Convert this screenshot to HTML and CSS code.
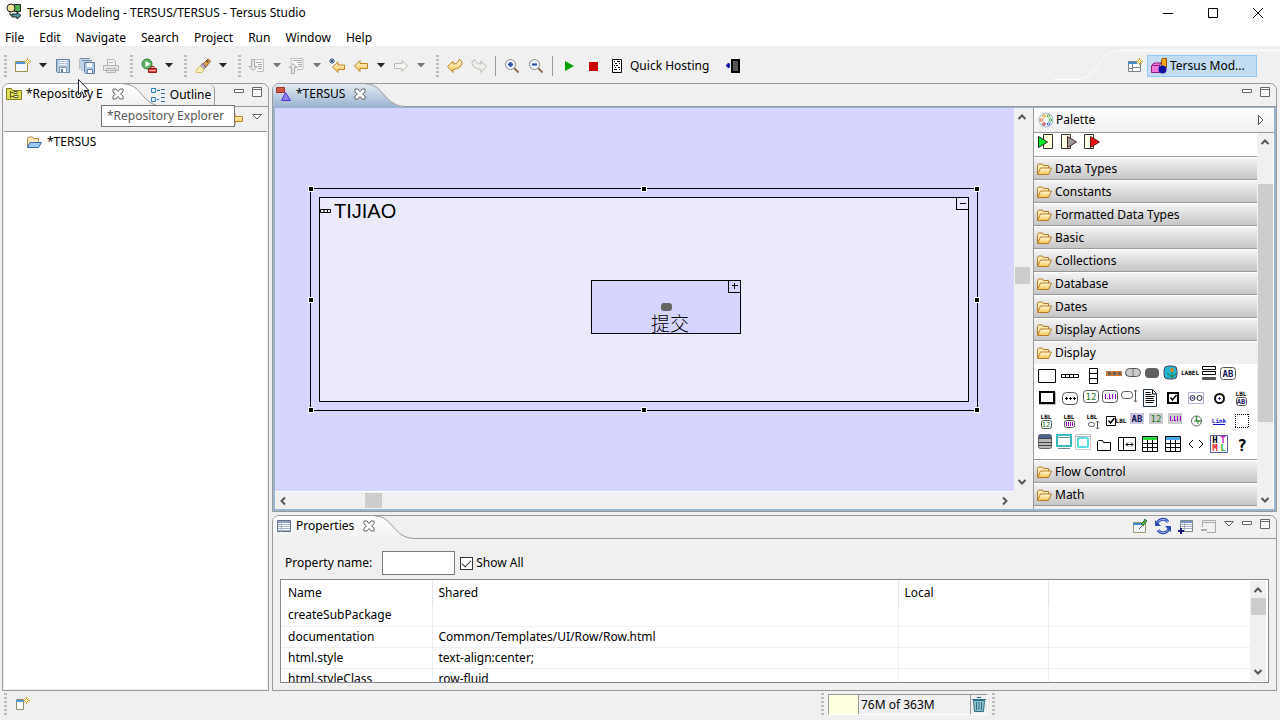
FILE: index.html
```html
<!DOCTYPE html>
<html lang="en">
<head>
<meta charset="utf-8">
<title>Tersus Modeling - TERSUS/TERSUS - Tersus Studio</title>
<link rel="stylesheet" href="styles.css">
</head>
<body>
<svg class="defs" aria-hidden="true">
  <defs>
    <linearGradient id="gold" x1="0" y1="0" x2="0" y2="1"><stop offset="0" stop-color="#fffbe0"/><stop offset="1" stop-color="#f3c34c"/></linearGradient>
    <linearGradient id="tabBlue" x1="0" y1="0" x2="0" y2="1"><stop offset="0" stop-color="#e3ebf3"/><stop offset="1" stop-color="#9ab4d1"/></linearGradient>
    <linearGradient id="tabLight" x1="0" y1="0" x2="0" y2="1"><stop offset="0" stop-color="#ffffff"/><stop offset="1" stop-color="#f0f0f0"/></linearGradient>
  </defs>
  <symbol id="i-folder" viewBox="0 0 16 16"><path d="M1.500 13V4.500l1-1.500h4l1 1.500h5V7" fill="#fdeab4" stroke="#b57a25"/><path d="M1.500 13.500L4.500 7h11l-3 6.500z" fill="url(#gold)" stroke="#b57a25"/></symbol>
  <symbol id="i-folder-blue" viewBox="0 0 16 16"><path d="M1.500 13V4.500l1-1.500h4l1 1.500h5V8" fill="#fbe9b6" stroke="#a58a50"/><path d="M1.500 13.500L4 8.500h11.500l-3 5z" fill="#9cc8f5" stroke="#3566b0"/></symbol>
  <symbol id="i-save" viewBox="0 0 16 16"><path d="M1.500 1.500h13v13h-12l-1-1z" fill="#b4c9e2" stroke="#637f9f"/><path d="M4 2h8v5H4z" fill="#f4f8fc"/><path d="M4 3.500h8M4 5.500h8" stroke="#b9c8da"/><path d="M4.500 9.500h7v5h-7z" fill="#fff" stroke="#8294aa"/><path d="M6 11h2v3H6z" fill="#637f9f"/></symbol>
  <symbol id="i-close" viewBox="0 0 12 12"><path d="M1 1h3l2 2.500L8 1h3v3L8.500 6 11 8v3H8L6 8.500 4 11H1V8l2.500-2L1 4z" fill="#fff" stroke="#666"/></symbol>
  <symbol id="i-min" viewBox="0 0 12 12"><path d="M1.500 3.500h9v3h-9z" fill="#fff" stroke="#666"/></symbol>
  <symbol id="i-max" viewBox="0 0 12 12"><path d="M1.500 1.500h9v9h-9zM1 3.500h10" fill="#fff" stroke="#666"/></symbol>
  <symbol id="i-menu" viewBox="0 0 12 12"><path d="M1.500 3.500h9L6 8z" fill="#fff" stroke="#666"/></symbol>
  <symbol id="i-up" viewBox="0 0 10 10"><path d="M1.500 7L5 3.500 8.500 7" fill="none" stroke="#555" stroke-width="2"/></symbol>
  <symbol id="i-down" viewBox="0 0 10 10"><path d="M1.500 3L5 6.500 8.500 3" fill="none" stroke="#555" stroke-width="2"/></symbol>
  <symbol id="i-left" viewBox="0 0 10 10"><path d="M7 1.500L3.500 5 7 8.500" fill="none" stroke="#555" stroke-width="2"/></symbol>
  <symbol id="i-right" viewBox="0 0 10 10"><path d="M3 1.500L6.500 5 3 8.500" fill="none" stroke="#555" stroke-width="2"/></symbol>
  <symbol id="i-drop" viewBox="0 0 8 5"><path d="M0 0h8L4 4.500z" fill="currentColor"/></symbol>
  <symbol id="i-larrow" viewBox="0 0 16 16"><path d="M1.500 8L7 2.500v3h7.500v5H7v3z" fill="url(#gold)" stroke="#bd8420"/></symbol>
  <symbol id="i-props" viewBox="0 0 16 16"><path d="M1.500 2.500h13v11h-13z" fill="#fff" stroke="#60708c"/><path d="M2 3h12v2H2z" fill="#8ca4c8"/><path d="M2 6.500h12M2 8.500h12M2 10.500h12M2 12.500h12M5.500 5v9" stroke="#a4b2c8"/></symbol>
</svg>

<header class="titlebar">
  <svg class="i16 app-icon" viewBox="0 0 16 16"><path d="M8.500 1.500h6v7h-6z" fill="#4fae4f" stroke="#222"/><circle cx="5" cy="5" r="4" fill="#efe29a" stroke="#222"/><path d="M4 9v3h3" fill="none" stroke="#222"/><path d="M6 11h5V9l4 3.500L11 16v-2H6z" fill="#4f9ca8" stroke="#222"/></svg>
  <h1>Tersus Modeling - TERSUS/TERSUS - Tersus Studio</h1>
  <button class="win" aria-label="Minimize"><svg class="i12" viewBox="0 0 12 12"><path d="M1 6.500h10" stroke="#000"/></svg></button>
  <button class="win" aria-label="Maximize"><svg class="i12" viewBox="0 0 12 12"><path d="M1.500 1.500h9v9h-9z" fill="none" stroke="#000"/></svg></button>
  <button class="win" aria-label="Close"><svg class="i12" viewBox="0 0 12 12"><path d="M1 1l10 10M11 1L1 11" stroke="#000"/></svg></button>
</header>

<nav class="menubar">
  <button>File</button><button>Edit</button><button>Navigate</button><button>Search</button><button>Project</button><button>Run</button><button>Window</button><button>Help</button>
</nav>

<div class="toolbar">
  <span class="grip"></span>
  <button class="tool" aria-label="New"><svg class="i16" viewBox="0 0 16 16"><path d="M.5 3.500h12v10H.5z" fill="#f2f8fe" stroke="#a58d50"/><path d="M1 4h9v2H1z" fill="#4d95d8"/><path d="M12.500 0v7M9 3.500h7M10.500 1.500l4 4M14.500 1.500l-4 4" stroke="#c79b2c"/><path d="M12.500 2v3M11 3.500h3" stroke="#fff6c0"/></svg></button>
  <button class="drop" aria-label="New menu"><svg><use href="#i-drop"/></svg></button>
  <button class="tool" aria-label="Save"><svg class="i16"><use href="#i-save"/></svg></button>
  <button class="tool" aria-label="Save All"><svg class="i16" viewBox="0 0 16 16"><path d="M1 11V.5h10M3 13V2.500h10" fill="none" stroke="#7890ac"/><path d="M1 1h9v1H3v9H1zM3 3h9v1H5v8H3z" fill="#bfd1e6"/><path d="M5.500 4.500h10v11h-9l-1-1z" fill="#b4c9e2" stroke="#637f9f"/><path d="M8 5h5v4H8z" fill="#fff"/><path d="M8.500 11.500h5v4h-5z" fill="#fff" stroke="#637f9f"/></svg></button>
  <button class="tool" aria-label="Print"><svg class="i16" viewBox="0 0 16 16"><path d="M4.500 7V1.500h6l2 2V7" fill="#f7f7f7" stroke="#b4b4b4"/><path d="M6 4.500h4M.5 7.500h15v5H.5zM3.500 10.500h9v4h-9z" fill="#e5e5e5" stroke="#b4b4b4"/></svg></button>
  <span class="grip"></span>
  <button class="tool" aria-label="Run"><svg class="i16" viewBox="0 0 16 16"><circle cx="6" cy="6" r="5" fill="#5cb661" stroke="#2c7f3a"/><path d="M4.500 3v6l5-3z" fill="#fff"/><path d="M10 10V8.500h3V10" fill="none" stroke="#a02020"/><path d="M7.500 10.500h8v4h-8z" fill="#d84040" stroke="#951818"/><path d="M8 12.500h7" stroke="#f3a9a9"/></svg></button>
  <button class="drop" aria-label="Run menu"><svg><use href="#i-drop"/></svg></button>
  <span class="grip"></span>
  <button class="tool" aria-label="Search"><svg class="i16" viewBox="0 0 16 16"><path d="M8 6l5-5 2.500 2L11 9z" fill="#e8a54b" stroke="#8d5b2a"/><path d="M5.500 7.500L8 5.500 11 9 9 11z" fill="#b8a9c9" stroke="#77657f"/><path d="M5.500 8L9 11l-2 3.500H1L2 11z" fill="#fdf3b5" stroke="#d9bd62"/><path d="M12 4l1-1" stroke="#50301a" stroke-width="2"/></svg></button>
  <button class="drop" aria-label="Search menu"><svg><use href="#i-drop"/></svg></button>
  <span class="grip"></span>
  <button class="tool" aria-label="Next annotation"><svg class="i16" viewBox="0 0 16 16"><path d="M6 1.500h8.500v12H8" fill="#f8f8f8" stroke="#c2c2c2"/><path d="M7 4.500h6M9 6.500h4M9 8.500h4M9 10.500h4" stroke="#aaa"/><path d="M2.500 1.500h3v7H8l-4 4-4-4h2.500z" fill="#e6e6e6" stroke="#aaa"/></svg></button>
  <button class="drop off" aria-label="Next menu"><svg><use href="#i-drop"/></svg></button>
  <button class="tool" aria-label="Previous annotation"><svg class="i16" viewBox="0 0 16 16"><path d="M2 6V.5h12v11H8" fill="#f8f8f8" stroke="#c2c2c2"/><path d="M4 2.500h9M8 4.500h5M9 6.500h4M9 8.500h4" stroke="#aaa"/><path d="M2.500 15.500h3v-6H8l-4-4-4 4h2.500z" fill="#e6e6e6" stroke="#aaa"/></svg></button>
  <button class="drop off" aria-label="Previous menu"><svg><use href="#i-drop"/></svg></button>
  <button class="tool" aria-label="Last edit location"><svg class="i16" viewBox="0 0 16 16"><path d="M3.500 9L9 4v3h6.500v4.500H9v3z" fill="url(#gold)" stroke="#bd8420"/><path d="M3 0v6M0 3h6M1 1l4 4M5 1L1 5" stroke="#34567a"/></svg></button>
  <button class="tool" aria-label="Back"><svg class="i16"><use href="#i-larrow"/></svg></button>
  <button class="drop" aria-label="Back menu"><svg><use href="#i-drop"/></svg></button>
  <button class="tool" aria-label="Forward"><svg class="i16" viewBox="0 0 16 16"><path d="M14.500 8L9 2.500v3H1.500v5H9v3z" fill="#f4f4ee" stroke="#bbb"/></svg></button>
  <button class="drop off" aria-label="Forward menu"><svg><use href="#i-drop"/></svg></button>
  <span class="grip"></span>
  <button class="tool" aria-label="Undo"><svg class="i16" viewBox="0 0 16 16"><path d="M.5 8.500L6 3v3q5 0 6-4.500 3 1 3 4-1 5-9 6v3z" fill="url(#gold)" stroke="#bd8420"/></svg></button>
  <button class="tool" aria-label="Redo"><svg class="i16" viewBox="0 0 16 16"><path d="M15.500 8.500L10 3v3Q5 6 4 1.500 1 2.500 1 5.500q1 5 9 6v3z" fill="#f0f0ea" stroke="#bbb"/></svg></button>
  <span class="rule"></span>
  <button class="tool" aria-label="Zoom in"><svg class="i16" viewBox="0 0 16 16"><path d="M10 10l4.500 4.500" stroke="#8b6d52" stroke-width="2"/><circle cx="6.500" cy="6.500" r="5" fill="#eef4fd" stroke="#8b8b82"/><path d="M6.500 4v5M4 6.500h5" stroke="#2347a5" stroke-width="2"/></svg></button>
  <button class="tool" aria-label="Zoom out"><svg class="i16" viewBox="0 0 16 16"><path d="M10 10l4.500 4.500" stroke="#8b6d52" stroke-width="2"/><circle cx="6.500" cy="6.500" r="5" fill="#eef4fd" stroke="#8b8b82"/><path d="M4 6.500h5" stroke="#2347a5" stroke-width="2"/></svg></button>
  <span class="rule"></span>
  <button class="tool" aria-label="Start"><svg class="i16" viewBox="0 0 16 16"><path d="M4 3l9 5-9 5z" fill="#00a000"/></svg></button>
  <button class="tool" aria-label="Stop"><svg class="i16" viewBox="0 0 16 16"><path d="M4 4h9v9H4z" fill="#c80000"/></svg></button>
  <button class="hosting"><svg class="i16" viewBox="0 0 16 16"><path d="M3.500 1.500h9v13h-9z" fill="#fff" stroke="#000"/><path d="M5 3.500h1M8 3.500h3M6 5.500h2M10 5.500h1M5 7.500h1M7 7.500h2M6 9.500h1M9 9.500h2M5 11.500h3M10 11.500h1" stroke="#000"/></svg>Quick Hosting</button>
  <button class="tool" aria-label="Exit"><svg class="i16" viewBox="0 0 16 16"><path d="M7 2h7v12H7z" fill="#555" stroke="#000" stroke-width="2"/><path d="M1 7.500h4M3.500 5v5" stroke="#0b0ba8" stroke-width="2"/></svg></button>
  <div class="perspectives">
    <svg class="swoosh" viewBox="0 0 226 36"><path d="M0 33.500h22c24-1 20-29 46-29h158" fill="none" stroke="#fff" stroke-width="1"/></svg>
    <button class="tool" aria-label="Open perspective"><svg class="i16" viewBox="0 0 16 16"><path d="M1.500 3.500h12v10h-12z" fill="#fff" stroke="#78848c"/><path d="M1 4h9v2H1z" fill="#4389cc"/><path d="M5.500 6v8M6 9.500h7M1 10.500h4" stroke="#78848c"/><path d="M12.500 0v7M9 3.500h7M10.500 1.500l4 4M14.500 1.500l-4 4" stroke="#c79b2c"/><path d="M12.500 2v3M11 3.500h3" stroke="#fff6c0"/></svg></button>
    <button class="perspective"><svg class="i16" viewBox="0 0 16 16"><path d="M10.500 2.500l1-2h4v9l-1.500 2h-3.500z" fill="#f4a81c" stroke="#8c4c08"/><path d="M.5 7.500L3 5h7l-1.500 2.500v7h-8z" fill="#f27adb" stroke="#8c1c7c"/><path d="M1 7.500h7.500" stroke="#8c1c7c"/><circle cx="11.500" cy="11.500" r="4" fill="#1414a0"/></svg>Tersus Mod...</button>
  </div>
</div>

<main class="workbench">
  <section class="view explorer">
    <div class="tabs">
      <div class="tab light"><svg class="i16" viewBox="0 0 16 16"><path d="M.5 13.500v-11h5l1 2h9v9z" fill="#dede55" stroke="#807c1c"/><path d="M4.500 5v7M5 6.500h2M5 10.500h3M8 5.500h3v2H8zM8 9.500h4v2H8z" fill="#fff" stroke="#5c5c20"/></svg><span>*Repository E</span><button aria-label="Close"><svg class="i12"><use href="#i-close"/></svg></button></div>
      <svg class="curve" viewBox="0 0 40 23"><path d="M0 0C18 0 18 22.500 40 22.500V23H0z" fill="url(#tabLight)"/><path d="M0 0C18 0 18 22.500 40 22.500" fill="none" stroke="#999"/></svg>
      <div class="tab idle"><svg class="i16" viewBox="0 0 16 16"><path d="M1.500 1.500h4v4h-4zM1.500 10.500h4v4h-4z" fill="#e6f4ff" stroke="#2b7fb8"/><path d="M7 3.500h3M11 2.500h4M11 6.500h4M7 12.500h2M11 10.500h4M11 14.500h4" stroke="#2b6f9e"/></svg><span>Outline</span></div>
      <div class="controls"><button aria-label="Minimize"><svg class="i12"><use href="#i-min"/></svg></button><button aria-label="Maximize"><svg class="i12"><use href="#i-max"/></svg></button></div>
    </div>
    <div class="viewbar"><button aria-label="Link"><svg class="i16"><use href="#i-larrow"/></svg></button><button aria-label="View menu"><svg class="i12"><use href="#i-menu"/></svg></button></div>
    <ul class="tree"><li><svg class="i16"><use href="#i-folder-blue"/></svg>*TERSUS</li></ul>
    <div class="tooltip" role="tooltip">*Repository Explorer</div>
    <svg class="pointer" viewBox="0 0 12 19"><path d="M.5.5v15l3.500-3 2.500 5.500 2-1L6 11.500h5z" fill="#fff" stroke="#223"/></svg>
  </section>

  <div class="right">
    <section class="view editor">
      <div class="tabs">
        <div class="tab blue"><svg class="i16" viewBox="0 0 16 16"><path d="M.5 1.500h8v5h-8z" fill="#d05545" stroke="#a03428"/><path d="M9.500 6.500l5 8h-9z" fill="#8c80f0" stroke="#5030d8"/></svg><span>*TERSUS</span><button aria-label="Close"><svg class="i12"><use href="#i-close"/></svg></button></div>
        <svg class="curve" viewBox="0 0 40 23"><path d="M0 0C18 0 18 23 40 23H0z" fill="url(#tabBlue)"/><path d="M0 0C18 0 18 22.500 40 22.500" fill="none" stroke="#999"/></svg>
        <div class="controls"><button aria-label="Minimize"><svg class="i12"><use href="#i-min"/></svg></button><button aria-label="Maximize"><svg class="i12"><use href="#i-max"/></svg></button></div>
      </div>
      <div class="editor-body">
        <div class="canvas-pane">
          <div class="canvas">
            <div class="selection">
              <i class="h nw"></i><i class="h n"></i><i class="h ne"></i><i class="h w"></i><i class="h e"></i><i class="h sw"></i><i class="h s"></i><i class="h se"></i>
              <div class="row-model">
                <div class="model-name"><svg viewBox="0 0 12 6"><path d="M.5 1.500h10v3H.5zM4 1v4M7.500 1v4" fill="#fff" stroke="#000"/></svg>TIJIAO</div>
                <button class="expander" aria-label="Collapse"><svg class="i12" viewBox="0 0 12 12"><path d="M3 5.500h6" stroke="#000"/></svg></button>
                <div class="button-model"><span class="pill"></span><span>提交</span><button class="expander" aria-label="Expand"><svg class="i12" viewBox="0 0 12 12"><path d="M3 5.500h6M5.500 3v6" stroke="#000"/></svg></button></div>
              </div>
            </div>
          </div>
          <div class="vscroll"><svg><use href="#i-up"/></svg><i class="thumb mid"></i><svg><use href="#i-down"/></svg></div>
          <div class="hscroll"><svg><use href="#i-left"/></svg><i class="thumb"></i><svg><use href="#i-right"/></svg></div>
        </div>
        <aside class="palette">
          <div class="palette-head"><svg class="i16" viewBox="0 0 16 16"><circle cx="8" cy="8" r="7" fill="#f2f8fc" stroke="#a3b9c8"/><g fill="#fff" stroke-width="1"><circle cx="6" cy="4" r="1.300" stroke="#e8a020"/><circle cx="10.500" cy="4" r="1.300" stroke="#60a030"/><circle cx="3.500" cy="8" r="1.300" stroke="#e87020"/><circle cx="12.500" cy="8" r="1.300" stroke="#30a040"/><circle cx="6" cy="12" r="1.300" stroke="#c03030"/><circle cx="10.500" cy="12" r="1.300" stroke="#4060c0"/></g></svg><span>Palette</span><button aria-label="Hide palette"><svg class="i12" viewBox="0 0 12 12"><path d="M3.500 1.500v9L8 6z" fill="#fff" stroke="#555"/></svg></button></div>
          <div class="palette-body">
            <div class="drawers">
              <div class="slots">
                <svg class="i20" viewBox="0 0 20 20"><path d="M7.500 1.500h9v14h-9z" fill="#ffffd8" stroke="#333"/><path d="M2.500 3.500v11l9-5.500z" fill="#00f020" stroke="#222"/></svg>
                <svg class="i20" viewBox="0 0 20 20"><path d="M2.500 1.500h9v14h-9z" fill="#ffffe8" stroke="#333"/><path d="M8.500 3.500v11l9-5.500z" fill="#999" stroke="#522"/></svg>
                <svg class="i20" viewBox="0 0 20 20"><path d="M2.500 1.500h9v14h-9z" fill="#ffffe8" stroke="#333"/><path d="M8.500 3.500v11l9-5.500z" fill="#f01010" stroke="#522"/></svg>
              </div>
              <button class="drawer"><svg class="i16"><use href="#i-folder"/></svg>Data Types</button>
              <button class="drawer"><svg class="i16"><use href="#i-folder"/></svg>Constants</button>
              <button class="drawer"><svg class="i16"><use href="#i-folder"/></svg>Formatted Data Types</button>
              <button class="drawer"><svg class="i16"><use href="#i-folder"/></svg>Basic</button>
              <button class="drawer"><svg class="i16"><use href="#i-folder"/></svg>Collections</button>
              <button class="drawer"><svg class="i16"><use href="#i-folder"/></svg>Database</button>
              <button class="drawer"><svg class="i16"><use href="#i-folder"/></svg>Dates</button>
              <button class="drawer"><svg class="i16"><use href="#i-folder"/></svg>Display Actions</button>
              <button class="drawer open"><svg class="i16"><use href="#i-folder"/></svg>Display</button>
              <div class="elements">
                <svg class="i20" viewBox="0 0 20 20"><path d="M1.500 4.500h17v13h-17z" fill="#fff" stroke="#000"/></svg>
                <svg class="i20" viewBox="0 0 20 20"><path d="M1.500 9.500h17v3h-17zM5.500 9v4M9.500 9v4M13.500 9v4" fill="#fff" stroke="#000"/></svg>
                <svg class="i20" viewBox="0 0 20 20"><path d="M6.500 3.500h8v15h-8zM6 8.500h9M6 13.500h9" fill="#fff" stroke="#000"/></svg>
                <svg class="i16" viewBox="0 0 16 16"><path d="M0 6h16v5H0z" fill="#cc7736"/><path d="M2 7h3v3H2zM7 7h3v3H7zM12 7h3v3h-3z" fill="#6b6258"/></svg>
                <svg class="i16" viewBox="0 0 16 16"><rect x=".5" y="3.500" width="15" height="8" rx="4" fill="#ccc" stroke="#555"/><path d="M8 4v7" stroke="#777"/></svg>
                <svg class="i16" viewBox="0 0 16 16"><rect x="1" y="3" width="14" height="10" rx="4" fill="#606060"/></svg>
                <svg class="i16" viewBox="0 0 16 16"><rect x="1" y="1" width="13" height="13" rx="4" fill="#20b6d2" stroke="#546"/><circle cx="9" cy="5" r="2" fill="#d9892b"/><path d="M9 7v6M4 8l5 4 4-3" fill="none" stroke="#277a35" stroke-width="1"/></svg>
                <svg class="i16" viewBox="0 0 16 16"><text x="8" y="10" class="px">LABEL</text></svg>
                <svg class="i16" viewBox="0 0 16 16"><path d="M1.500 1.500h13v3h-13zM1.500 6.500h13v3h-13z" fill="#fff" stroke="#000"/><rect x="1" y="12" width="14" height="3" rx="1" fill="#555"/></svg>
                <svg class="i16" viewBox="0 0 16 16"><rect x=".5" y="2.500" width="15" height="12" rx="3" fill="#fff" stroke="#555"/><text x="8" y="12" class="ab">AB</text></svg>
                <svg class="i20" viewBox="0 0 20 20"><path d="M3 4h14v11H3z" fill="#fff" stroke="#000" stroke-width="2"/><path d="M2 16.500h16.500V4" fill="none" stroke="#bbb"/></svg>
                <svg class="i20" viewBox="0 0 20 20"><rect x="2.500" y="4.500" width="15" height="12" rx="4" fill="#fff" stroke="#555"/><path d="M5 10.500h3M9 10.500h3M13 10.500h3M6.500 9v3M10.500 9v3M14.500 9v3" stroke="#000"/></svg>
                <svg class="i16" viewBox="0 0 16 16"><rect x=".5" y="2.500" width="15" height="12" rx="3" fill="#fff" stroke="#555"/><text x="8" y="12" class="num">12</text></svg>
                <svg class="i16" viewBox="0 0 16 16"><rect x=".5" y="2.500" width="15" height="12" rx="3" fill="#fff" stroke="#555"/><path d="M3.500 6v5M7.500 6v5M10.500 6v5M13.500 6v5M5 10.500h1M8 10.500h1" stroke="#90b"/></svg>
                <svg class="i16" viewBox="0 0 16 16"><rect x=".5" y="3.500" width="11" height="7" rx="3" fill="#fff" stroke="#555"/><path d="M14.500 2v12M13 3.500L14.500 2 16 3.500M13 12.500l1.500 1.500 1.500-1.500" fill="none" stroke="#555"/></svg>
                <svg class="i20" viewBox="0 0 20 20"><path d="M3.500 1.500h9l4 4v13h-13z" fill="#fff" stroke="#234"/><path d="M5.500 4.500h5M5.500 6.500h6M5.500 8.500h9M5.500 10.500h8M5.500 12.500h9M5.500 14.500h8M12.500 2v4h4" fill="none" stroke="#000"/></svg>
                <svg class="i20" viewBox="0 0 20 20"><path d="M5 5h10v10H5z" fill="#fff" stroke="#000" stroke-width="2"/><path d="M7.500 9.500l2 2.500 4-5" fill="none" stroke="#000" stroke-width="1.500"/></svg>
                <svg class="i20" viewBox="0 0 20 20"><path d="M2.500 4.500h15v11h-15z" fill="#fff" stroke="#b5b5dc"/><g fill="#fff" stroke="#224"><circle cx="6.500" cy="10" r="2.500"/><circle cx="13.500" cy="10" r="2.500"/></g><circle cx="6.500" cy="10" r="1" fill="#44a"/></svg>
                <svg class="i20" viewBox="0 0 20 20"><circle cx="10.500" cy="10.500" r="4.500" fill="#fff" stroke="#111" stroke-width="2"/><path d="M10.500 9v3M9 10.500h3" stroke="#33b"/></svg>
                <svg class="i20" viewBox="0 0 20 20"><text x="9" y="8" class="px">LBL</text><rect x="4.500" y="9.500" width="10" height="8" rx="2" fill="#fff" stroke="#555"/><text x="9" y="16" class="ab sm">AB</text></svg>
                <svg class="i20" viewBox="0 0 20 20"><text x="9" y="8" class="px">LBL</text><rect x="4.500" y="9.500" width="10" height="8" rx="2" fill="#fff" stroke="#555"/><text x="9" y="16" class="num sm">12</text></svg>
                <svg class="i20" viewBox="0 0 20 20"><text x="9" y="8" class="px">LBL</text><rect x="4.500" y="9.500" width="10" height="7" rx="2" fill="#fff" stroke="#555"/><path d="M6.500 11v4M8.500 11v4M10.500 11v4M12.500 11v4" stroke="#90b"/></svg>
                <svg class="i20" viewBox="0 0 20 20"><text x="9" y="8" class="px">LBL</text><rect x="5.500" y="11.500" width="6" height="4" rx="2" fill="#fff" stroke="#555"/><path d="M14.500 10v8M13 11.500l1.500-1.500 1.500 1.500M13 16.500l1.500 1.500 1.500-1.500" fill="none" stroke="#555"/></svg>
                <svg class="i20" viewBox="0 0 20 20"><path d="M.5 5.500h9v9h-9z" fill="#fff" stroke="#000"/><path d="M2.500 9.500l2 2.500 4-5" fill="none" stroke="#000" stroke-width="1.500"/><text x="15" y="12" class="px">LBL</text></svg>
                <svg class="i16" viewBox="0 0 16 16"><path d="M1 2h14v11H1z" fill="#c8c8dc"/><text x="8" y="11" class="ab">AB</text></svg>
                <svg class="i16" viewBox="0 0 16 16"><path d="M1 2h14v11H1z" fill="#ccc"/><text x="8" y="11" class="num">12</text></svg>
                <svg class="i16" viewBox="0 0 16 16"><path d="M1 2h14v11H1z" fill="#ccc"/><path d="M3.500 5v5M7.500 5v5M10.500 5v5M13.500 5v5M5 9.500h1M8 9.500h1" stroke="#90b"/></svg>
                <svg class="i20" viewBox="0 0 20 20"><circle cx="10.500" cy="10" r="5" fill="#fff" stroke="#666"/><path d="M10.500 5v5h5" fill="none" stroke="#389038" stroke-width="1.500"/><path d="M8 10h4v3" fill="none" stroke="#389038"/></svg>
                <svg class="i20" viewBox="0 0 20 20"><text x="10" y="12" class="link">Link</text><path d="M4 13.500h12" stroke="#11c"/></svg>
                <svg class="i20" viewBox="0 0 20 20"><path d="M3 3.500h14M3 16.500h14M3.500 3v14M16.500 3v14" fill="none" stroke="#000" stroke-dasharray="1 1"/></svg>
                <svg class="i16" viewBox="0 0 16 16"><rect x="1.500" y=".5" width="13" height="14" rx="2" fill="#b8b8b8" stroke="#666"/><path d="M2 1h12v3H2z" fill="#48618e"/><path d="M1 4.500h14M1 8.500h14M1 11.500h14" stroke="#444"/></svg>
                <svg class="i16" viewBox="0 0 16 16"><path d="M1 1h14v11H1z" fill="#fff" stroke="#35bcbc" stroke-width="2"/><path d="M2 3.500h12M2 14.500h12" stroke="#789"/></svg>
                <svg class="i16" viewBox="0 0 16 16"><path d="M.5.5h15v15H.5z" fill="#fff" stroke="#ccc"/><rect x="3" y="4" width="10" height="9" rx="1" fill="#fff" stroke="#54dfe6" stroke-width="2"/><path d="M1 2.500h14" stroke="#bbb"/></svg>
                <svg class="i20" viewBox="0 0 20 20"><path d="M3.500 16.500v-9l1-1h4l1 2h7v8z" fill="#fff" stroke="#000"/></svg>
                <svg class="i20" viewBox="0 0 20 20"><path d="M1.500 3.500h17v13h-17zM6.500 3v14" fill="#fff" stroke="#000"/><path d="M9 10.500h7M11 8.500l-2 2 2 2M14 8.500l2 2-2 2" fill="none" stroke="#000"/></svg>
                <svg class="i20" viewBox="0 0 20 20"><path d="M2.500 2.500h15v15h-15zM7.500 6v11M12.500 6v11M2 9.500h15M2 13.500h15" fill="#fff" stroke="#000"/><path d="M3 3h14v3H3z" fill="#2bd83b"/></svg>
                <svg class="i20" viewBox="0 0 20 20"><path d="M2.500 2.500h15v15h-15zM7.500 6v11M12.500 6v11M2 9.500h15M2 13.500h15" fill="#fff" stroke="#000"/><path d="M3 3h14v3H3z" fill="#4aa8ea"/></svg>
                <svg class="i20" viewBox="0 0 20 20"><path d="M7 6L3 10l4 4M13 6l4 4-4 4" fill="none" stroke="#000"/></svg>
                <svg class="i20" viewBox="0 0 20 20"><path d="M1.500 1.500h17v17h-17z" fill="#fff" stroke="#5c5cac"/><text x="6" y="9" class="tag">H</text><text x="14" y="9" class="tag t">T</text><text x="6" y="17" class="tag m">M</text><text x="14" y="17" class="tag l">L</text></svg>
                <svg class="i20" viewBox="0 0 20 20"><text x="10" y="17" class="q">?</text></svg>
              </div>
              <button class="drawer"><svg class="i16"><use href="#i-folder"/></svg>Flow Control</button>
              <button class="drawer"><svg class="i16"><use href="#i-folder"/></svg>Math</button>
              <div class="drawer-edge"></div>
            </div>
            <div class="vscroll tall"><svg><use href="#i-up"/></svg><i class="thumb long"></i><svg><use href="#i-down"/></svg></div>
          </div>
        </aside>
      </div>
    </section>

    <section class="view properties">
      <div class="tabs">
        <div class="tab light"><svg class="i16"><use href="#i-props"/></svg><span>Properties</span><button aria-label="Close"><svg class="i12"><use href="#i-close"/></svg></button></div>
        <svg class="curve" viewBox="0 0 40 23"><path d="M0 0C18 0 18 22.500 40 22.500V23H0z" fill="url(#tabLight)"/><path d="M0 0C18 0 18 22.500 40 22.500" fill="none" stroke="#999"/></svg>
        <div class="controls">
          <button class="wide" aria-label="Pin"><svg class="i16" viewBox="0 0 16 16"><path d="M1.500 4.500h12v10h-12z" fill="#f1f8ff" stroke="#a09868"/><path d="M1 5h8v2H1z" fill="#3f8fd6"/><path d="M7 11l4-4" stroke="#555"/><path d="M9 6l3-3 1-2 2 2-2 2-2 3z" fill="#4fae4f" stroke="#247524"/></svg></button>
          <button class="wide" aria-label="Refresh"><svg class="i16" viewBox="0 0 16 16"><path d="M2 7a6 6 0 0 1 11-3M14 9a6 6 0 0 1-11 3" fill="none" stroke="#2b4cae" stroke-width="3"/><path d="M2 7a6 6 0 0 1 11-3M14 9a6 6 0 0 1-11 3" fill="none" stroke="#9db6f4"/><path d="M0 2v6h6zM16 14V8h-6z" fill="#2b4cae"/></svg></button>
          <button class="wide" aria-label="Add property"><svg class="i16" viewBox="0 0 16 16"><path d="M2.500 2.500h12v11h-12z" fill="#fff" stroke="#788"/><path d="M2 3h12v2H2z" fill="#7b92c4"/><path d="M3 6.500h11M3 8.500h11M3 10.500h11M6.500 5v8" stroke="#a4b2c8"/><path d="M3 10v6M0 13h6" stroke="#1c1c80" stroke-width="2"/></svg></button>
          <button class="wide" aria-label="Remove property"><svg class="i16" viewBox="0 0 16 16"><path d="M1.500 9V2.500h13v12H6M2 4.500h12" fill="none" stroke="#aaa"/><path d="M0 12h6" stroke="#aaa" stroke-width="2"/></svg></button>
          <button aria-label="View menu"><svg class="i12"><use href="#i-menu"/></svg></button><button aria-label="Minimize"><svg class="i12"><use href="#i-min"/></svg></button><button aria-label="Maximize"><svg class="i12"><use href="#i-max"/></svg></button>
        </div>
      </div>
      <form class="filter">
        <label for="pname">Property name:</label><input id="pname" type="text">
        <label class="check"><input type="checkbox" checked>Show All</label>
      </form>
      <div class="grid">
        <table>
          <colgroup><col class="c-name"><col class="c-shared"><col class="c-local"><col></colgroup>
          <thead><tr><th>Name</th><th>Shared</th><th>Local</th><th></th></tr></thead>
          <tbody>
            <tr><td>createSubPackage</td><td></td><td></td><td></td></tr>
            <tr><td>documentation</td><td>Common/Templates/UI/Row/Row.html</td><td></td><td></td></tr>
            <tr><td>html.style</td><td>text-align:center;</td><td></td><td></td></tr>
            <tr><td>html.styleClass</td><td>row-fluid</td><td></td><td></td></tr>
          </tbody>
        </table>
        <div class="vscroll"><svg><use href="#i-up"/></svg><i class="thumb top"></i><svg><use href="#i-down"/></svg></div>
      </div>
    </section>
  </div>
</main>

<footer class="status">
  <span class="grip"></span>
  <button class="tool" aria-label="Fast view"><svg class="i16" viewBox="0 0 16 16"><path d="M1.500 3.500h7v10h-7z" fill="#fff" stroke="#909070"/><path d="M1 4h8v2H1z" fill="#4d95d8"/><path d="M11.500 1v7M8 4.500h7M9.500 2.500l4 4M13.500 2.500l-4 4" stroke="#c79b2c"/><path d="M11.500 3v3M10 4.500h3" stroke="#fff6c0"/></svg></button>
  <div class="heap-area"><span class="grip"></span><div class="heap"><span class="used"></span><span class="amount">76M of 363M</span><button aria-label="Run garbage collector"><svg class="i16" viewBox="0 0 16 16"><path d="M2.500 4.500h11l-1 11h-9z" fill="#8fc4c4" stroke="#2e6c8c"/><path d="M1 3.500h14M6 1.500h4M5.500 6v8M8 6v8M10.500 6v8" stroke="#2e6c8c"/></svg></button></div><span class="grip"></span></div>
</footer>
</body>
</html>
```
FILE: styles.css
```css
* { box-sizing: border-box; }
body {
  margin: 0;
  height: 100vh;
  display: flex;
  flex-direction: column;
  overflow: hidden;
  background: #f0f0f0;
  color: #000;
  font: 12px/16px "Noto Sans", "Noto Sans CJK SC", sans-serif;
}
button {
  display: flex;
  align-items: center;
  justify-content: center;
  margin: 0;
  padding: 0;
  border: 0;
  background: none;
  color: inherit;
  font: inherit;
  white-space: nowrap;
}
svg { display: block; flex: none; overflow: visible; }
.defs { position: absolute; width: 0; height: 0; }
.i12 { width: 12px; height: 12px; }
.i16 { width: 16px; height: 16px; }
.i20 { width: 20px; height: 20px; }

/* window frame */
.titlebar { display: flex; align-items: center; height: 26px; padding-left: 6px; background: #fff; }
.titlebar h1 { flex: 1; margin: 0 0 0 5px; font: inherit; }
.app-icon { margin-bottom: 4px; }
.win { width: 45px; height: 26px; }
.menubar { display: flex; gap: 15px; height: 20px; padding: 3px 5px 0; background: #fff; }

/* main toolbar */
.toolbar { display: flex; align-items: center; height: 36px; padding-top: 3px; }
.grip {
  width: 3px;
  height: 22px;
  margin: 0 4px 0 7px;
  background: repeating-linear-gradient(#bdbdbd 0 2px, #f0f0f0 2px 4px);
}
.toolbar > .grip:first-child, .status > .grip { margin-left: 4px; }
.tool { flex: none; width: 24px; height: 24px; }
.drop { flex: none; width: 16px; height: 24px; color: #222; }
.drop svg { width: 8px; height: 5px; }
.drop.off { color: #777; }
.rule { width: 1px; height: 20px; margin: 0 4px; background: #999; }
.hosting { gap: 5px; padding: 0 12px 0 4px; }
.perspectives {
  position: relative;
  display: flex;
  align-items: center;
  justify-content: flex-end;
  width: 226px;
  height: 36px;
  margin-left: auto;
  padding-right: 23px;
}
.perspectives .tool, .perspective { position: relative; }
.swoosh { position: absolute; left: 0; top: -2px; width: 226px; height: 36px; }
.perspective { gap: 3px; min-width: 110px; height: 22px; justify-content: flex-start; padding: 0 6px 0 3px; border: 1px solid #90c8f6; background: #c2dcf2; }

/* views */
.workbench { flex: 1; min-height: 0; display: flex; gap: 3px; padding: 1px 3px 1px 2px; }
.view { display: flex; flex-direction: column; border: 1px solid #999; border-radius: 7px 7px 0 0; }
.explorer { position: relative; flex: none; width: 267px; }
.right { flex: 1; min-width: 0; display: flex; flex-direction: column; gap: 3px; }
.tabs { display: flex; flex: none; height: 23px; }
.tab { display: flex; align-items: center; gap: 4px; padding: 0 0 3px 3px; border-radius: 6px 0 0 0; }
.tab button { margin-left: 5px; }
.tab.light { background: linear-gradient(#fff, #f0f0f0); }
.tab.blue { background: linear-gradient(#e3ebf3, #9ab4d1); }
.tab.idle { border-bottom: 1px solid #999; border-right: 1px solid #999; border-radius: 0 6px 0 0; padding: 0 3px 1px 0; }
.curve { width: 40px; height: 23px; }
.explorer .curve { margin-right: -14px; }
.controls {
  flex: 1;
  display: flex;
  align-items: flex-start;
  justify-content: flex-end;
  gap: 6px;
  padding: 2px 5px 0 0;
  border-bottom: 1px solid #999;
}
.controls .wide { width: 17px; }
.viewbar { display: flex; justify-content: flex-end; gap: 7px; height: 24px; padding: 4px 5px 0 0; align-items: flex-start; }
.tree { flex: 1; margin: 0 1px 1px; padding: 2px 22px; border-top: 1px solid #999; background: #fff; list-style: none; }
.tree li { display: flex; gap: 5px; align-items: center; }
.tooltip { position: absolute; left: 98px; top: 21px; min-width: 134px; padding: 2px 5px; height: 22px; border: 1px solid #767676; background: #fff; color: #575757; white-space: nowrap; }
.pointer { position: absolute; left: 75px; top: -5px; width: 12px; height: 19px; }

/* editor */
.editor { flex: 1; min-height: 0; }
.editor-body { flex: 1; min-height: 0; display: flex; border: 2px solid #9ab4d1; border-top-width: 1px; }
.canvas-pane { flex: 1; min-width: 0; display: grid; grid-template: minmax(0, 1fr) 18px / minmax(0, 1fr) 19px; background: #f0f0f0; }
.canvas { position: relative; background: #d6d5ff; }
.selection { position: absolute; inset: 80px 36px 80px 35px; border: 1px solid #000; }
.h { position: absolute; width: 6px; height: 6px; border: 1px solid #fff; background: #000; }
.nw, .n, .ne { top: -3px; }
.sw, .s, .se { bottom: -3px; }
.nw, .w, .sw { left: -3px; }
.ne, .e, .se { right: -3px; }
.n, .s { left: 50%; margin-left: -3px; }
.w, .e { top: 50%; margin-top: -3px; }
.row-model { position: absolute; inset: 8px; display: flex; align-items: center; justify-content: center; border: 1px solid #000; background: #ebeafd; }
.model-name { position: absolute; left: 0; top: 2px; display: flex; align-items: center; gap: 2px; font: 20px/22px "Liberation Sans", sans-serif; }
.model-name svg { width: 12px; height: 6px; }
.expander { position: absolute; right: 0; top: 0; width: 12px; height: 12px; border: solid #000; border-width: 0 0 1px 1px; }
.button-model { position: relative; display: flex; flex-direction: column; align-items: center; justify-content: flex-end; width: 150px; height: 54px; margin-left: 44px; margin-top: 14px; border: 1px solid #000; background: #d6d5ff; font: 19px/20px "Noto Sans CJK SC", sans-serif; }
.button-model span:nth-child(2) { padding-left: 8px; font-weight: 300; }
.pill { width: 11px; height: 8px; margin-bottom: 2px; border-radius: 3px; background: #666; }
.vscroll { display: flex; flex-direction: column; align-items: center; width: 16px; padding: 4px 0; background: #f0f0f0; }
.vscroll svg, .hscroll svg { width: 10px; height: 10px; }
.vscroll svg:last-child, .hscroll svg:last-child { margin-left: auto; }
.vscroll svg:last-child { margin: auto 0 0; }
.thumb { width: 15px; height: 17px; background: #cdcdcd; }
.thumb.mid { margin-top: 145px; }
.thumb.top { margin-top: 3px; }
.thumb.long { height: 238px; margin-top: 37px; }
.hscroll { display: flex; align-items: center; height: 18px; padding: 0 4px 0 3px; border-top: 1px solid #fff; }
.hscroll .thumb { width: 17px; height: 15px; margin-left: 77px; }

/* palette */
.palette { flex: none; width: 241px; display: flex; flex-direction: column; border-left: 1px solid #999; background: #fff; }
.palette-head { display: flex; align-items: center; gap: 2px; flex: none; height: 25px; padding: 0 7px 0 4px; border-bottom: 1px solid #999; background: linear-gradient(#fff, #f0f0f0); }
.palette-head span { flex: 1; }
.palette-body { flex: 1; min-height: 0; display: flex; }
.drawers { flex: 1; overflow: hidden; }
.slots { display: flex; gap: 3px; height: 24px; padding-left: 2px; border-bottom: 1px solid #999; }
.drawer { width: 223px; height: 23px; justify-content: flex-start; gap: 3px; padding-left: 2px; border-top: 1px solid #fff; border-bottom: 1px solid #999; background: linear-gradient(#f4f4f4, #c6c6c6); }
.drawer.open { border-bottom: 0; background: #f0f0f0; }
.elements { display: flex; flex-wrap: wrap; align-content: flex-start; gap: 3px; width: 223px; min-height: 96px; padding: 1px 0 0 3px; border-bottom: 1px solid #999; }
.drawer-edge { height: 6px; background: #f0f0f0; }
.vscroll.tall { margin-right: 1px; }
text { text-anchor: middle; font-family: "DejaVu Sans Mono", monospace; font-weight: 700; }
.px { font-size: 6px; }
.ab { font-size: 9px; fill: #115; }
.num { font-size: 9px; fill: #272; font-weight: 400; }
.sm { font-size: 7px; }
.link { font-size: 6px; fill: #11c; }
.q { font-size: 16px; }
.tag { font-size: 9px; }
.t { fill: #c2b; }
.m { fill: #d22; }
.l { fill: #2b3; }

/* properties */
.properties { flex: none; }
.filter { display: flex; align-items: center; gap: 5px; padding: 12px 12px 4px; }
.filter input[type="text"] { width: 73px; height: 24px; margin-left: 5px; border: 1px solid #7a7a7a; background: #fff; font: inherit; }
.check { display: flex; align-items: center; gap: 3px; }
.check input { appearance: none; width: 13px; height: 13px; margin: 0; border: 1px solid #333; background: #fff; display: grid; place-items: center; }
.check input::before { content: ""; width: 8px; height: 4px; margin-bottom: 2px; border: solid #333; border-width: 0 0 1px 1px; transform: rotate(-45deg); }
.grid { display: flex; height: 104px; margin: 0 7px 7px; padding: 1px; border: 1px solid #828790; background: #fff; overflow: hidden; }
.grid table { flex: 1; border-collapse: collapse; table-layout: fixed; width: 100%; }
.grid .vscroll { flex: none; height: 100%; margin-right: 1px; }
.c-name, .c-local { width: 150px; }
.c-shared { width: 466px; }
th { height: 24px; padding: 0 6px; border-right: 1px solid #e5e5e5; font-weight: 400; text-align: left; }
td { height: 21px; padding: 0 6px; border-right: 1px solid #eef0f3; border-bottom: 1px solid #eef0f3; }
th:last-child, td:last-child { border-right: 0; }

/* status line */
.status { display: flex; align-items: center; flex: none; height: 28px; padding-bottom: 4px; }
.heap-area { display: flex; align-items: center; margin-left: auto; margin-right: 285px; }
.heap-area .grip:last-child { margin-left: 4px; margin-right: 0; }
.heap { display: flex; width: 160px; height: 21px; border: 1px solid #999; border-color: #999 #fff #fff #999; }
.used { width: 30px; border-right: 1px solid #999; background: #ffffe1; }
.amount { flex: 1; padding: 2px; }
.heap button { width: 17px; border-left: 1px solid #999; }
```
